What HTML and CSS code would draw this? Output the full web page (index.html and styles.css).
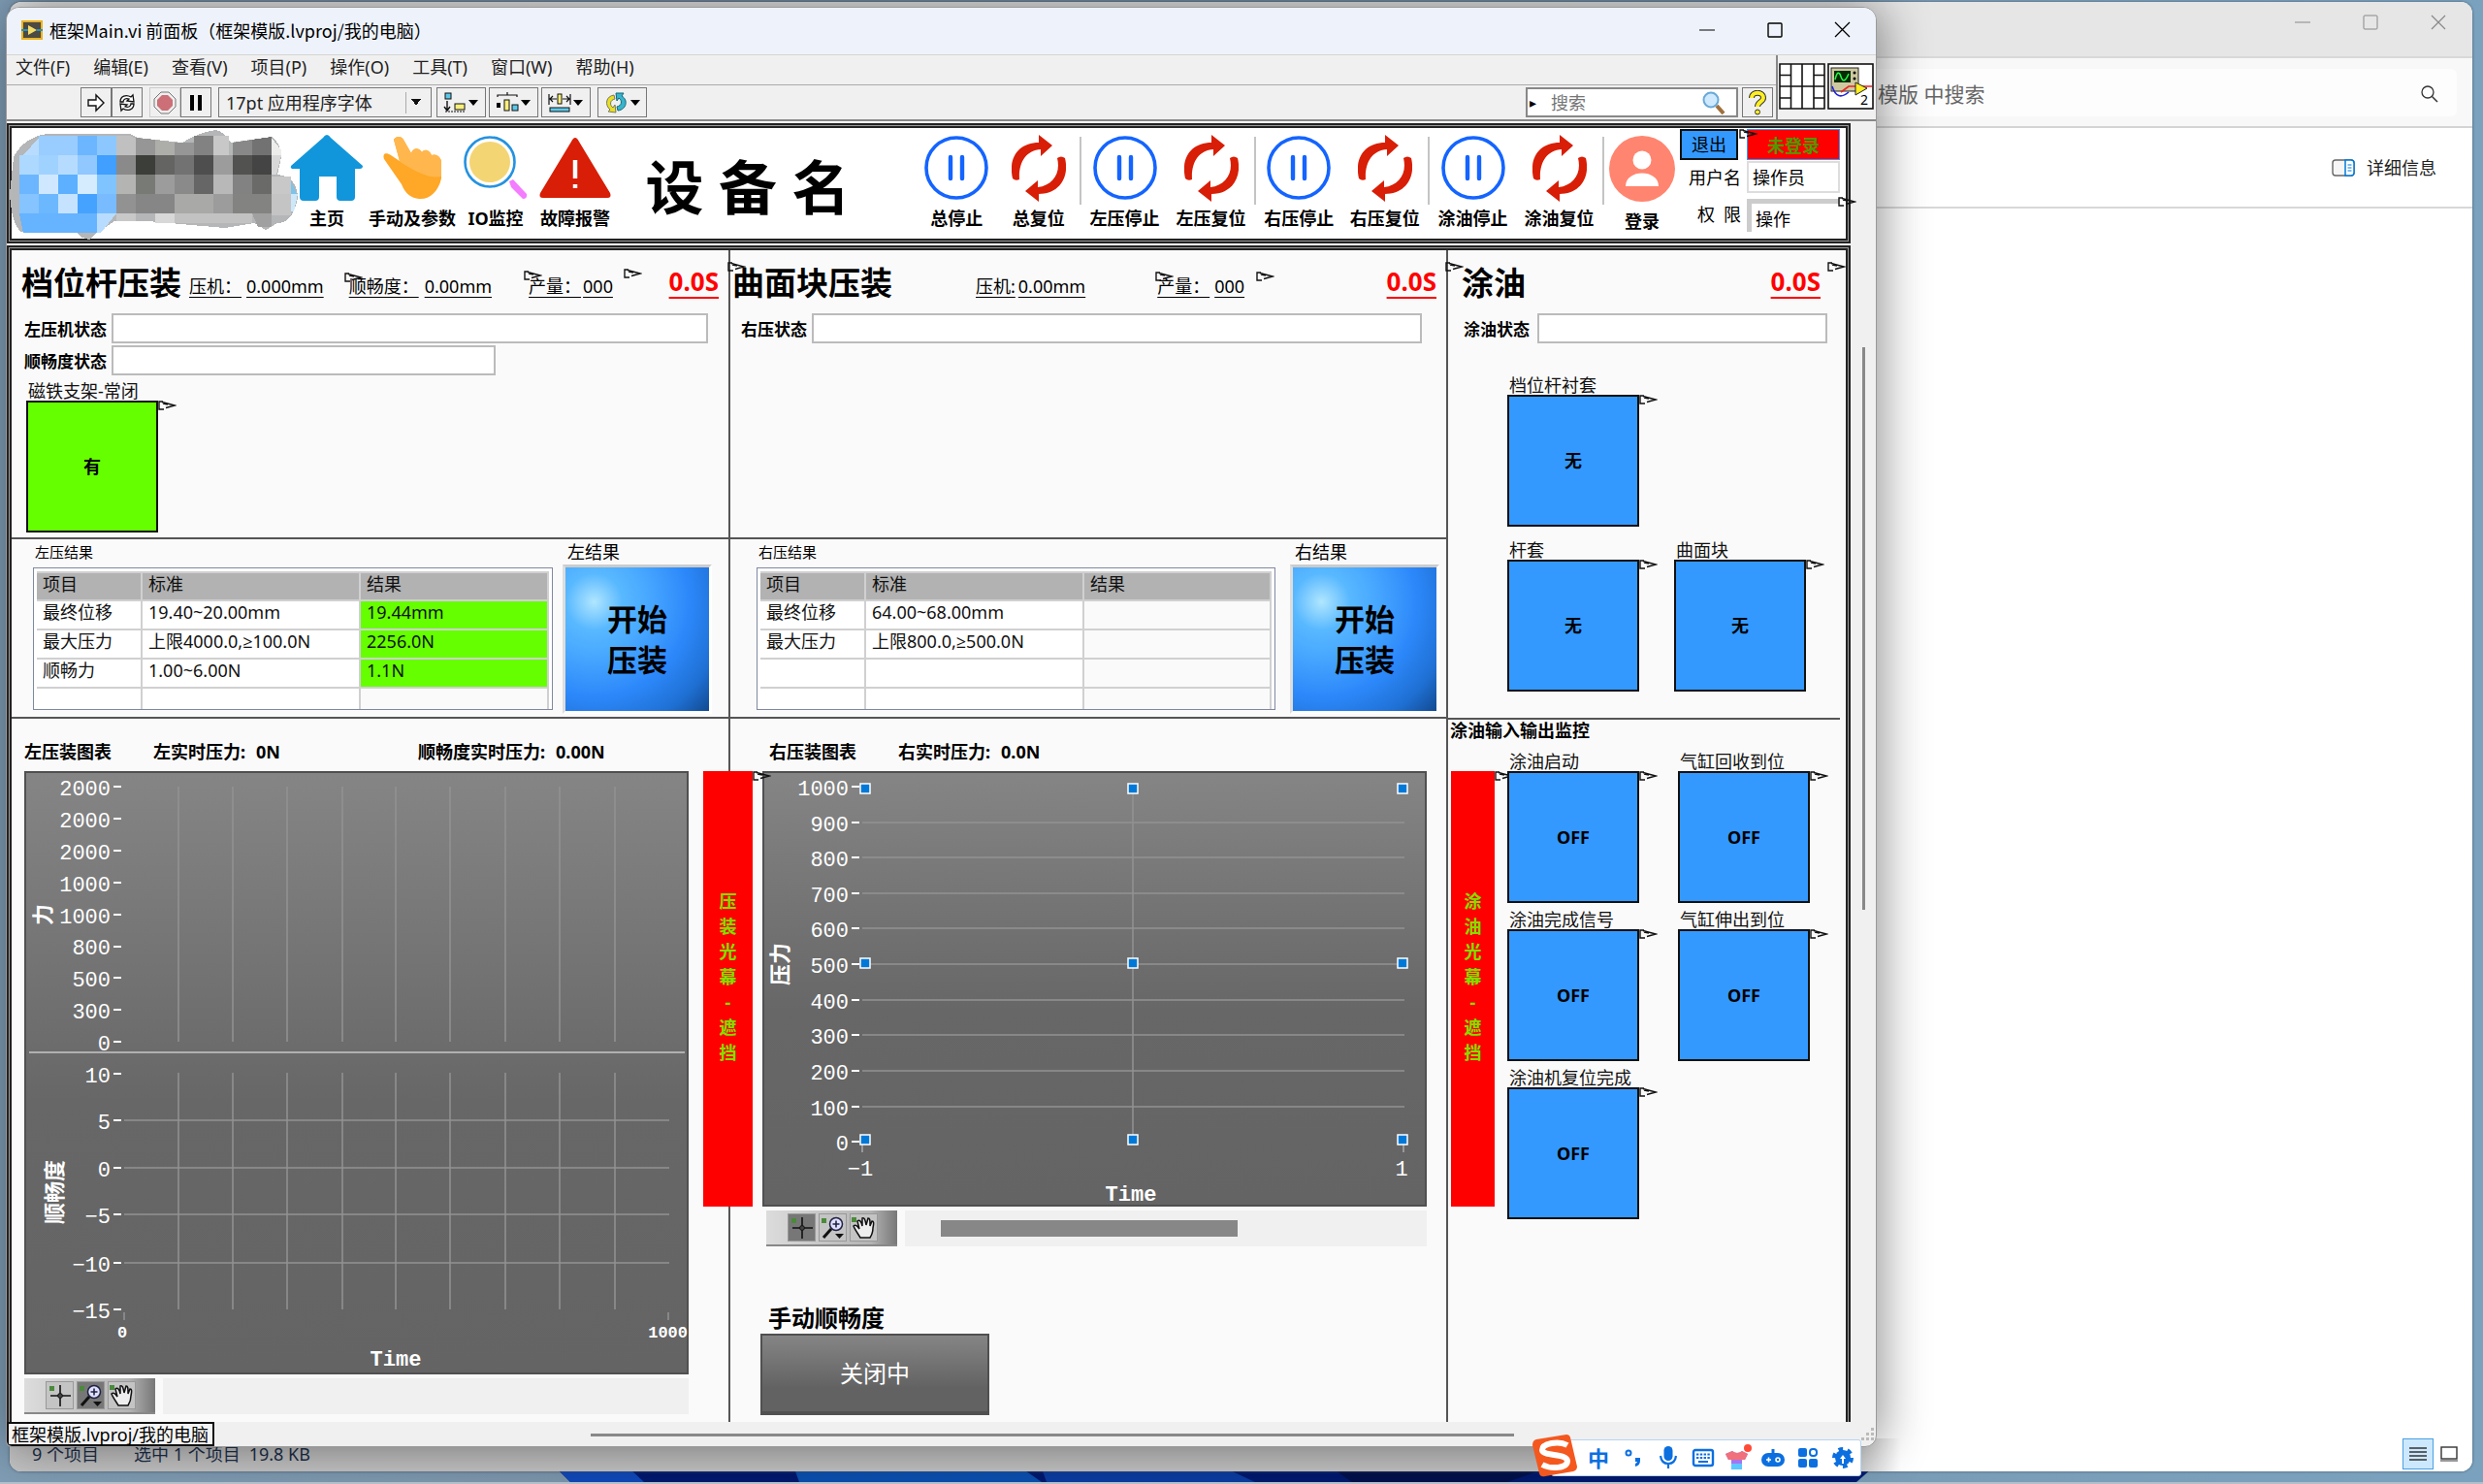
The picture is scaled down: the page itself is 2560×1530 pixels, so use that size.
FILE: index.html
```html
<!DOCTYPE html>
<html lang="zh-CN">
<head>
<meta charset="utf-8">
<title>框架Main.vi 前面板</title>
<link rel="stylesheet" href="styles.css">
</head>
<body>
<svg class="defs" aria-hidden="true">
  <defs>
    <symbol id="pin" viewBox="0 0 19 10"><path d="M5 1H1V9H6M4 1.5L17 5L8 7.5M5 3L10 4" fill="none" stroke="#111" stroke-width="1.4"/></symbol>
    <symbol id="pause" viewBox="0 0 66 66"><circle cx="33" cy="33" r="31" fill="#fff" stroke="#1464ff" stroke-width="3.6"/><path d="M27 22V44M39 22V44" stroke="#1464ff" stroke-width="4.4" stroke-linecap="round"/></symbol>
    <symbol id="reset" viewBox="0 0 56 70"><g fill="#d81e06"><path d="M1 46C-4 24 8 9 28 9V1L42 12L30 23V16C15 17 7 29 8 47Q4 49 1 46Z"/><path d="M55 25C60 46 48 62 28 62V70L14 59L27 48V55C42 53 51 41 47 25Q51 22 55 25Z"/></g></symbol>
    <linearGradient id="chartbg" x1="0" y1="0" x2="0" y2="1"><stop offset="0" stop-color="#858585"/><stop offset=".55" stop-color="#676767"/><stop offset="1" stop-color="#646464"/></linearGradient>
    <symbol id="cross" viewBox="0 0 28 28"><path d="M14 3V25M4 14H25" stroke="#111" stroke-width="1.6"/><circle cx="14" cy="14" r="2.4" fill="#444" stroke="#111"/><rect x="3" y="4" width="5" height="5" fill="#4a8a3a"/></symbol>
    <symbol id="lens" viewBox="0 0 28 28"><circle cx="17" cy="10" r="6.5" fill="#dfe0ff" stroke="#224" stroke-width="1.5"/><path d="M17 6.500V13.500M13.500 10H20.500" stroke="#224" stroke-width="1.6"/><path d="M12 15L4 24" stroke="#111" stroke-width="3"/><path d="M16 20H25L20.500 25Z" fill="#111"/><rect x="2" y="4" width="5" height="5" fill="#4a8a3a"/></symbol>
    <symbol id="grab" viewBox="0 0 28 28"><path d="M10 24C7 19 4 15 3 12C5 10 7 12 9 15L7 7C9 5 11 7 12 12L12 4C14 3 15 5 16 11L18 4C20 4 20 6 20 12L22 7C24 7 24 9 23 14C23 19 22 21 20 24Z" fill="#eee" stroke="#111" stroke-width="1.5"/><rect x="1" y="3" width="5" height="5" fill="#4a8a3a"/></symbol>
  </defs>
</svg>
<div class="desktop">
  <svg class="bloom" viewBox="0 0 1356 14" preserveAspectRatio="none" aria-hidden="true">
    <path d="M0 0H1356L1340 14H14Z" fill="#00196e"/>
    <path d="M0 0H75L90 14H14Z" fill="#1048b8"/><path d="M245 0H480L500 14H250Z" fill="#0a4fae"/><path d="M500 0H690L720 14H505Z" fill="#0b3ca0"/><path d="M800 0H1020L980 14H820Z" fill="#01104a"/>
  </svg>

  <section class="explorer">
    <header class="ex-title">
      <button aria-label="最小化"><svg width="16" height="16" viewBox="0 0 16 16"><path d="M0 8H16" stroke="#888"/></svg></button>
      <button aria-label="最大化"><svg width="16" height="16" viewBox="0 0 16 16"><rect x="1" y="1" width="14" height="14" rx="1" fill="none" stroke="#888"/></svg></button>
      <button aria-label="关闭"><svg width="16" height="16" viewBox="0 0 16 16"><path d="M1 1L15 15M15 1L1 15" stroke="#888" stroke-width="1.2"/></svg></button>
    </header>
    <div class="ex-address">
      <div class="ex-search"><input type="text" aria-label="搜索" value="模版 中搜索"><svg width="18" height="18" viewBox="0 0 18 18"><circle cx="7" cy="7" r="6" fill="none" stroke="#333" stroke-width="1.3"/><path d="M11.500 11.500L17 17" stroke="#333" stroke-width="1.5"/></svg></div>
    </div>
    <div class="ex-tools"><button><svg width="24" height="18" viewBox="0 0 24 18"><rect x="1" y="1" width="22" height="16" rx="3" fill="#f6f6f6" stroke="#666" stroke-width="1.4"/><path d="M14 1H20Q23 1 23 4V14Q23 17 20 17H14Z" fill="#fff" stroke="#0078d7" stroke-width="1.5"/><path d="M16.500 6H20.500M16.500 9H20.500M16.500 12H20.500" stroke="#0078d7"/></svg>详细信息</button></div>
    <div class="ex-body"></div>
    <footer class="ex-status"><span>9 个项目</span><span>选中 1 个项目&ensp;19.8 KB</span>
      <div class="views"><button class="on" aria-label="详细信息视图"><svg width="18" height="16" viewBox="0 0 18 16"><path d="M0 2H18M0 6H18M0 10H18M0 14H18" stroke="#333" stroke-width="1.4"/></svg></button><button aria-label="大图标视图"><svg width="18" height="16" viewBox="0 0 18 16"><rect x="1" y="1" width="16" height="12" fill="none" stroke="#333" stroke-width="1.4"/><path d="M0 15H18" stroke="#333"/></svg></button></div>
    </footer>
  </section>

  <section class="lv">
    <header class="lv-title">
      <svg width="22" height="20" viewBox="0 0 22 20"><rect width="22" height="20" fill="#ecb21f"/><rect x="2" y="2" width="18" height="16" fill="#4c4a42"/><path d="M7 5L16 10L7 15Z" fill="#f4dc6a"/><path d="M0 10H7M16 10H22" stroke="#2a8fb8" stroke-width="2"/></svg>
      <h1>框架Main.vi 前面板（框架模版.lvproj/我的电脑）</h1>
      <button aria-label="最小化"><svg width="18" height="18" viewBox="0 0 18 18"><path d="M1 9H17" stroke="#000" stroke-width="1.2"/></svg></button>
      <button aria-label="最大化"><svg width="18" height="18" viewBox="0 0 18 18"><rect x="2" y="2" width="14" height="14" rx="1" fill="none" stroke="#000" stroke-width="1.4"/></svg></button>
      <button aria-label="关闭"><svg width="18" height="18" viewBox="0 0 18 18"><path d="M1 1L16 16M16 1L1 16" stroke="#000" stroke-width="1.3"/></svg></button>
    </header>

    <div class="lv-bars">
      <div class="bars-left">
        <nav class="menu"><a href="#">文件(F)</a><a href="#">编辑(E)</a><a href="#">查看(V)</a><a href="#">项目(P)</a><a href="#">操作(O)</a><a href="#">工具(T)</a><a href="#">窗口(W)</a><a href="#">帮助(H)</a></nav>
        <div class="tools">
          <div class="tb-group run"><button class="tb" aria-label="运行"><svg width="20" height="20" viewBox="0 0 20 20"><path d="M2 7H10V2L18 10L10 18V13H2Z" fill="#fff" stroke="#111" stroke-width="1.4"/></svg></button><button class="tb" aria-label="连续运行"><svg width="26" height="20" viewBox="0 0 26 20"><path d="M6 9C6 3 12 1 17 4L19 2L20 9L13 8L15 6C12 5 9 6 9 9ZM20 11C20 17 14 19 9 16L7 18L6 11L13 12L11 14C14 15 17 14 17 11Z" fill="#fff" stroke="#111" stroke-width="1.3"/></svg></button></div>
          <div class="tb-group"><button class="tb dim" aria-label="中止"><svg width="24" height="24" viewBox="0 0 24 24"><path d="M8 1H16L23 8V16L16 23H8L1 16V8Z" fill="#eee" stroke="#777"/><path d="M9 4H15L20 9V15L15 20H9L4 15V9Z" fill="#cc6f76"/></svg></button><button class="tb" aria-label="暂停"><svg width="16" height="18" viewBox="0 0 16 18"><path d="M4 1V17M12 1V17" stroke="#000" stroke-width="4"/></svg></button></div>
          <select class="font-select" aria-label="字体"><option>17pt 应用程序字体</option></select>
          <button class="tb drop" aria-label="对齐"><svg width="38" height="22" viewBox="0 0 38 22"><rect x="2" y="1" width="6" height="6" fill="#5cc8e8" stroke="#111"/><path d="M4 9V18M1 15L4 19L7 15" fill="none" stroke="#111" stroke-width="1.4"/><rect x="12" y="12" width="10" height="6" fill="#f8ef7a" stroke="#111"/><path d="M2 20H23" stroke="#111" stroke-dasharray="2 1"/><path d="M26 8H36L31 14Z"/></svg></button>
          <button class="tb drop" aria-label="分布"><svg width="38" height="22" viewBox="0 0 38 22"><path d="M2 5V3H22V5M12 3V0" fill="none" stroke="#111" stroke-width="1.2"/><rect x="1" y="11" width="4" height="5"/><rect x="9" y="8" width="5" height="11" fill="#f8ef7a" stroke="#111"/><rect x="17" y="13" width="6" height="6" fill="#5cc8e8" stroke="#111"/><path d="M26 8H36L31 14Z"/></svg></button>
          <button class="tb drop" aria-label="调整大小"><svg width="38" height="22" viewBox="0 0 38 22"><path d="M1 2V13M23 2V13M2 7H9M15 7H22M5 4L2 7L5 10M19 4L22 7L19 10" fill="none" stroke="#111" stroke-width="1.2"/><rect x="10" y="2" width="4" height="10" fill="#f8ef7a" stroke="#111"/><rect x="2" y="16" width="20" height="4" fill="#5cc8e8" stroke="#111"/><path d="M26 8H36L31 14Z"/></svg></button>
          <button class="tb drop last" aria-label="重新排序"><svg width="38" height="24" viewBox="0 0 38 24"><path d="M10 4C2 5 0 14 6 19L4 21L12 22L11 14L9 17C5 14 6 9 11 8Z" fill="#e8e020" stroke="#776"/><path d="M14 20C23 19 25 9 18 5L20 2L12 2L13 10L15 7C19 10 18 15 13 16Z" fill="#38b4cc" stroke="#167"/><path d="M27 9H37L32 15Z"/></svg></button>
          <div class="lv-search"><span>▸</span><input type="text" placeholder="搜索" aria-label="搜索"><svg width="26" height="26" viewBox="0 0 26 26"><circle cx="10" cy="10" r="7.5" fill="#cfeaff" stroke="#6aa9d8" stroke-width="2"/><path d="M16 16L23 24" stroke="#a0703c" stroke-width="4"/></svg></div>
          <button class="tb help" aria-label="帮助"><svg width="20" height="26" viewBox="0 0 20 26"><path d="M4 8C4 1 16 1 16 8C16 12 10 12 10 17" fill="none" stroke="#333" stroke-width="6"/><path d="M4 8C4 1 16 1 16 8C16 12 10 12 10 17" fill="none" stroke="#ffee22" stroke-width="4"/><circle cx="10" cy="22.500" r="2.500" fill="#fe2" stroke="#333"/></svg></button>
        </div>
      </div>
      <div class="bars-right">
        <svg width="48" height="48" viewBox="0 0 48 48"><path d="M1 1H47V47H1ZM12.500 1V47M24 1V47M36 1V47M1 12.500H12M36 12.500H47M1 24H47M1 36H12M36 36H47" fill="#fff" stroke="#111" stroke-width="1.6"/></svg>
        <svg width="48" height="48" viewBox="0 0 48 48"><rect x="1" y="1" width="46" height="46" fill="#fff" stroke="#111" stroke-width="1.6"/><rect x="4" y="5" width="28" height="24" fill="#cfc9a0" stroke="#222"/><rect x="7" y="8" width="17" height="12" fill="#052b05"/><path d="M8 17Q11 5 14 14T22 11" fill="none" stroke="#2f4" stroke-width="1.5"/><circle cx="28" cy="10" r="1.500"/><circle cx="28" cy="16" r="1.500"/><path d="M5 24Q10 40 22 30" fill="none" stroke="#22d" stroke-width="1.6"/><path d="M14 30L22 24H46" fill="none" stroke="#e22" stroke-width="1.6"/><path d="M29 20L41 26L29 33Z" fill="#fe2" stroke="#222"/><text x="34" y="43" font-size="14">2</text></svg>
      </div>
    </div>

    <div class="canvas">
      <div class="sheet">
        <div class="frame banner">
          <svg class="mosaic" width="300" height="116" viewBox="8 132 300 116" shape-rendering="crispEdges">
            <path d="M14 162Q24 142 48 138H134L142 142L188 147Q204 137 222 134Q232 136 238 147L280 141Q290 148 290 162L286 180Q306 182 307 204Q302 230 286 230L274 237L262 230L232 235L152 228L118 228L100 240L92 247Q84 246 78 239H22Q12 232 10 200Z" fill="#b4b6b8"/>
            <path d="M40 140H120V160H40Z" fill="#99ccff"/><path d="M24 160L40 142V160Z" fill="#b8dcff"/><path d="M80 140H100V160H80Z" fill="#6cb6ff"/><path d="M100 140H120V160H100Z" fill="#8cc8ff"/>
            <path d="M20 160H40V180H20Z" fill="#add8ff"/><path d="M40 160H60V180H40Z" fill="#a0d2ff"/><path d="M60 160H80V180H60Z" fill="#b5dcff"/><path d="M80 160H100V180H80Z" fill="#90c8ff"/><path d="M100 160H120V180H100Z" fill="#409fff"/>
            <path d="M20 180H40V200H20Z" fill="#6cb6ff"/><path d="M40 180H60V200H40Z" fill="#cfe8ff"/><path d="M60 180H80V200H60Z" fill="#5cb0ff"/><path d="M80 180H100V200H80Z" fill="#d5ecff"/><path d="M100 180H120V200H100Z" fill="#80c4ff"/>
            <path d="M20 200H40V220H20Z" fill="#86c4ff"/><path d="M40 200H60V220H40Z" fill="#6cb8ff"/><path d="M60 200H80V220H60Z" fill="#c5e3ff"/><path d="M80 200H100V220H80Z" fill="#45a3ff"/><path d="M100 200H120V220H100Z" fill="#78bcff"/>
            <path d="M20 220H100V240H24Z" fill="#66b3ff"/><path d="M100 220H120L112 230L104 240H100Z" fill="#b8dcff"/>
            <path d="M120 140H134L140 143V160H120Z" fill="#c0c0c0"/><path d="M140 142L160 144V160H140Z" fill="#969696"/><path d="M160 144L180 147V160H160Z" fill="#adaeaa"/><path d="M180 147H200V160H180Z" fill="#969696"/><path d="M200 140H220V160H200Z" fill="#828282"/><path d="M220 140H236V160H220Z" fill="#c8c8c8"/><path d="M240 147L260 144V160H240Z" fill="#888"/><path d="M260 144L280 141V160H260Z" fill="#727272"/><path d="M280 142L290 155V160H280Z" fill="#ededeb"/>
            <path d="M120 160H140V180H120Z" fill="#8a8a8a"/><path d="M140 160H160V180H140Z" fill="#3c3e3a"/><path d="M160 160H180V180H160Z" fill="#646562"/><path d="M180 160H200V180H180Z" fill="#727272"/><path d="M200 160H220V180H200Z" fill="#4e4e4e"/><path d="M220 160H240V180H220Z" fill="#9c9c9c"/><path d="M240 160H260V180H240Z" fill="#525250"/><path d="M260 160H280V180H260Z" fill="#444"/><path d="M280 160H290L285 180H280Z" fill="#d8d8d8"/>
            <path d="M120 180H140V200H120Z" fill="#b4b4b2"/><path d="M140 180H160V200H140Z" fill="#787a76"/><path d="M160 180H180V200H160Z" fill="#9c9c9c"/><path d="M180 180H200V200H180Z" fill="#8a8a8a"/><path d="M200 180H220V200H200Z" fill="#666"/><path d="M220 180H240V200H220Z" fill="#b8b8b8"/><path d="M240 180H260V200H240Z" fill="#828282"/><path d="M260 180H280V200H260Z" fill="#6a6a68"/><path d="M280 182H300V200H280Z" fill="#c8c8c8"/><path d="M300 186L306 200H300Z" fill="#7cc4ea"/>
            <path d="M120 200H140V220H120Z" fill="#929292"/><path d="M140 200H180V220H140Z" fill="#868686"/><path d="M180 200H220V220H180Z" fill="#a9a9a7"/><path d="M220 200H240V220H220Z" fill="#9c9c9c"/><path d="M240 200H280V220H240Z" fill="#838381"/><path d="M280 200H300V222H280Z" fill="#c4c4c4"/><path d="M300 200H307L303 218H300Z" fill="#cde8f8"/>
            <path d="M120 220H140V228H120Z" fill="#c8c8c8"/><path d="M160 220H180V230H160Z" fill="#d8d8d8"/><path d="M180 220H260V230H180Z" fill="#c2c2c2"/><path d="M260 220H280V234H266Z" fill="#a0a0a0"/>
          </svg>
          <button class="nav home"><svg width="76" height="68" viewBox="0 0 76 68"><path d="M38 0Q40 0 42 3L75 32Q75 35 72 35H67V64Q67 68 63 68H52Q48 68 48 64V43H30V64Q30 68 26 68H14Q10 68 10 64V35H2Q0 34 1 32L34 3Q36 0 38 0Z" fill="#1296db"/></svg>主页</button>
          <button class="nav hand"><svg width="62" height="66" viewBox="0 0 62 66"><path d="M12 4C14 0 20 0 22 4L30 18C32 12 38 12 41 17C44 13 49 15 51 20C56 18 60 22 61 26V44C58 58 48 66 38 65C30 64 24 60 20 50L2 24C0 18 4 17 9 20L18 26Z" fill="#ffa726"/><path d="M12 4C14 0 20 0 22 4L30 18C32 12 38 12 41 17C44 13 49 15 51 20C56 18 60 22 61 26V42C50 44 40 40 20 28L18 26Z" fill="#ffb74d"/></svg>手动及参数</button>
          <button class="nav io"><svg width="68" height="68" viewBox="0 0 68 68"><circle cx="28" cy="28" r="25.500" fill="#fff" stroke="#2492e0" stroke-width="2.600"/><circle cx="28" cy="28" r="21" fill="#f4d574"/><path d="M48 48L52 46L66 61Q67 66 62 66L50 54Z" fill="#f47cff"/></svg>IO监控</button>
          <button class="nav alarm"><svg width="76" height="66" viewBox="0 0 76 66"><path d="M38 2Q40 2 42 6L74 59Q76 64 71 64H5Q0 64 2 59L34 6Q36 2 38 2Z" fill="#d81e06"/><path d="M38 25V44M38 50V54" stroke="#fff" stroke-width="4.500"/></svg>故障报警</button>
          <h2 class="device">设 备 名</h2>
          <div class="ctl g1"><button class="nav"><svg width="66" height="66"><use href="#pause"/></svg>总停止</button><button class="nav"><svg width="56" height="70"><use href="#reset"/></svg>总复位</button></div>
          <div class="ctl g2"><button class="nav"><svg width="66" height="66"><use href="#pause"/></svg>左压停止</button><button class="nav"><svg width="56" height="70"><use href="#reset"/></svg>左压复位</button></div>
          <div class="ctl g3"><button class="nav"><svg width="66" height="66"><use href="#pause"/></svg>右压停止</button><button class="nav"><svg width="56" height="70"><use href="#reset"/></svg>右压复位</button></div>
          <div class="ctl g4"><button class="nav"><svg width="66" height="66"><use href="#pause"/></svg>涂油停止</button><button class="nav"><svg width="56" height="70"><use href="#reset"/></svg>涂油复位</button></div>
          <button class="nav login"><svg width="68" height="68" viewBox="0 0 68 68"><circle cx="34" cy="34" r="34" fill="#ff8570"/><circle cx="34" cy="25" r="9.500" fill="#fff"/><path d="M17 52C17 34 51 34 51 52Z" fill="#fff"/></svg>登录</button>
          <div class="user">
            <button class="logout">退出</button><div class="state">未登录</div>
            <label for="uname">用户名</label><input id="uname" type="text" value="操作员">
            <label for="role">权&ensp;限</label><input id="role" class="sunk" type="text" value="操作">
            <svg class="pin pin-user"><use href="#pin"/></svg><svg class="pin pin-role"><use href="#pin"/></svg>
          </div>
        </div>

        <div class="frame work">
          <div class="col">
            <section class="top">
              <div class="head"><h2>档位杆压装</h2><u class="k1">压机：</u><u class="v5">0.000mm</u><u class="k2">顺畅度：</u><u class="v6">0.00mm</u><u class="k3">产量：</u><u class="v2">000</u><strong>0.0S</strong></div>
              <div class="field wide"><label for="s1">左压机状态</label><input id="s1" type="text"></div>
              <div class="field half"><label for="s2">顺畅度状态</label><input id="s2" type="text"></div>
              <div class="led on magnet"><label for="m1">磁铁支架-常闭</label><button id="m1">有</button><svg class="pin"><use href="#pin"/></svg></div>
              <svg class="pin pa"><use href="#pin"/></svg><svg class="pin pb"><use href="#pin"/></svg><svg class="pin pc"><use href="#pin"/></svg><svg class="pin edge"><use href="#pin"/></svg>
            </section>
            <section class="mid">
              <div class="tbl"><h3>左压结果</h3><div class="tbl-box"><table>
                <colgroup><col class="c1"><col class="c2"><col></colgroup>
                <thead><tr><th>项目</th><th>标准</th><th>结果</th></tr></thead>
                <tbody><tr><td>最终位移</td><td>19.40~20.00mm</td><td class="ok">19.44mm</td></tr><tr><td>最大压力</td><td>上限4000.0,≥100.0N</td><td class="ok">2256.0N</td></tr><tr><td>顺畅力</td><td>1.00~6.00N</td><td class="ok">1.1N</td></tr><tr class="short"><td></td><td></td><td></td></tr></tbody>
              </table></div></div>
              <div class="start"><label for="b1">左结果</label><button id="b1">开始<br>压装</button></div>
            </section>
            <section class="low">
              <div class="live"><b>左压装图表</b><b class="l2">左实时压力:</b><b class="l3">0N</b><b class="l4">顺畅度实时压力:</b><b class="l3">0.00N</b></div>
              <svg class="chart" viewBox="0 0 685 622">
                <rect x="1" y="1" width="683" height="620" fill="url(#chartbg)" stroke="#505050" stroke-width="2"/>
                <path d="M159 16V279M215 16V279M271 16V279M328 16V279M383 16V279M439 16V279M496 16V279M552 16V279M609 16V279M159 311V555M215 311V555M271 311V555M328 311V555M383 311V555M439 311V555M496 311V555M552 311V555M609 311V555M103 360H665M103 409H665M103 457H665M103 507H665" stroke="#929292" stroke-width="1.500" fill="none"/>
                <path d="M5 290H681" stroke="#b0b0b0" stroke-width="2"/>
                <path d="M92 16H100M92 49H100M92 82H100M92 115H100M92 148H100M92 181H100M92 213H100M92 246H100M92 279H100M92 312H100M92 360H100M92 409H100M92 457H100M92 507H100M92 555H100" stroke="#fff" stroke-width="2"/>
                <path d="M103 558V566M664 558V566" stroke="#aaa"/>
                <g class="ticks" text-anchor="end"><text x="89" y="25">2000</text><text x="89" y="58">2000</text><text x="89" y="91">2000</text><text x="89" y="124">1000</text><text x="89" y="157">1000</text><text x="89" y="189">800</text><text x="89" y="222">500</text><text x="89" y="255">300</text><text x="89" y="288">0</text><text x="89" y="321">10</text><text x="89" y="369">5</text><text x="89" y="418">0</text><text x="89" y="466">−5</text><text x="89" y="516">−10</text><text x="89" y="564">−15</text></g>
                <g class="small"><text x="101" y="584" text-anchor="middle">0</text><text x="684" y="584" text-anchor="end">1000</text></g>
                <text class="axis" x="383" y="613" text-anchor="middle">Time</text>
                <text class="axis" transform="translate(27 148) rotate(-90)" text-anchor="middle">力</text>
                <text class="axis" transform="translate(39 434) rotate(-90)" text-anchor="middle">顺畅度</text>
              </svg>
              <div class="palette"><div class="pal"><button class="p-off" aria-label="光标"><svg width="28" height="28"><use href="#cross"/></svg></button><button class="p-on" aria-label="缩放"><svg width="28" height="28"><use href="#lens"/></svg></button><button class="p-off" aria-label="平移"><svg width="28" height="28"><use href="#grab"/></svg></button></div><div class="strip"></div></div>
            </section>
            <div class="curtain over"><span>压<br>装<br>光<br>幕<br>-<br>遮<br>挡</span><svg class="pin"><use href="#pin"/></svg></div>
          </div>

          <div class="col right">
            <section class="top">
              <div class="head"><h2>曲面块压装</h2><u class="r1">压机:</u><u class="r2">0.00mm</u><u class="r3">产量：</u><u class="v5">000</u><strong>0.0S</strong></div>
              <div class="field"><label for="s3">右压状态</label><input id="s3" type="text"></div>
              <svg class="pin pd"><use href="#pin"/></svg><svg class="pin pe"><use href="#pin"/></svg><svg class="pin edge"><use href="#pin"/></svg>
            </section>
            <section class="mid">
              <div class="tbl"><h3>右压结果</h3><div class="tbl-box"><table>
                <colgroup><col class="c1"><col class="c2"><col></colgroup>
                <thead><tr><th>项目</th><th>标准</th><th>结果</th></tr></thead>
                <tbody><tr><td>最终位移</td><td>64.00~68.00mm</td><td></td></tr><tr><td>最大压力</td><td>上限800.0,≥500.0N</td><td></td></tr><tr><td></td><td></td><td></td></tr><tr class="short"><td></td><td></td><td></td></tr></tbody>
              </table></div></div>
              <div class="start"><label for="b2">右结果</label><button id="b2">开始<br>压装</button></div>
            </section>
            <section class="low">
              <div class="live"><b>右压装图表</b><b class="l2">右实时压力:</b><b class="l3">0.0N</b></div>
              <svg class="chart" viewBox="0 0 685 449">
                <rect x="1" y="1" width="683" height="447" fill="url(#chartbg)" stroke="#505050" stroke-width="2"/>
                <path d="M382 16V382M103 53H662M103 89H662M103 126H662M103 162H662M103 199H662M103 236H662M103 272H662M103 309H662M103 346H662" stroke="#929292" stroke-width="1.500" fill="none"/>
                <path d="M92 16H100M92 53H100M92 89H100M92 126H100M92 162H100M92 199H100M92 236H100M92 272H100M92 309H100M92 346H100M92 382H100" stroke="#fff" stroke-width="2"/>
                <path d="M103 385V393M661 385V393" stroke="#ccc"/>
                <g class="ticks" text-anchor="end"><text x="89" y="25">1000</text><text x="89" y="62">900</text><text x="89" y="98">800</text><text x="89" y="135">700</text><text x="89" y="171">600</text><text x="89" y="208">500</text><text x="89" y="245">400</text><text x="89" y="281">300</text><text x="89" y="318">200</text><text x="89" y="355">100</text><text x="89" y="391">0</text></g>
                <g class="ticks" text-anchor="middle"><text x="101" y="417">−1</text><text x="659" y="417">1</text></g>
                <text class="axis" x="380" y="443" text-anchor="middle">Time</text>
                <text class="axis" transform="translate(26 199) rotate(-90)" text-anchor="middle">压力</text>
                <g fill="#0078d7" stroke="#fff" stroke-width="1.500"><rect x="101" y="13" width="10" height="10"/><rect x="377" y="13" width="10" height="10"/><rect x="655" y="13" width="10" height="10"/><rect x="101" y="193" width="10" height="10"/><rect x="377" y="193" width="10" height="10"/><rect x="655" y="193" width="10" height="10"/><rect x="101" y="375" width="10" height="10"/><rect x="377" y="375" width="10" height="10"/><rect x="655" y="375" width="10" height="10"/></g>
              </svg>
              <div class="palette"><div class="pal"><button class="p-on" aria-label="光标"><svg width="28" height="28"><use href="#cross"/></svg></button><button class="p-off" aria-label="缩放"><svg width="28" height="28"><use href="#lens"/></svg></button><button class="p-off" aria-label="平移"><svg width="28" height="28"><use href="#grab"/></svg></button></div><div class="strip"><i></i></div></div>
              <div class="manual"><label for="mm">手动顺畅度</label><button id="mm">关闭中</button></div>
            </section>
          </div>

          <div class="col oil">
            <section class="top">
              <div class="head"><h2>涂油</h2><strong>0.0S</strong></div>
              <div class="field"><label for="s4">涂油状态</label><input id="s4" type="text"></div>
              <div class="leds">
                <div class="led"><label for="o1">档位杆衬套</label><button id="o1">无</button><svg class="pin"><use href="#pin"/></svg></div><div></div>
                <div class="led"><label for="o2">杆套</label><button id="o2">无</button><svg class="pin"><use href="#pin"/></svg></div>
                <div class="led"><label for="o3">曲面块</label><button id="o3">无</button><svg class="pin"><use href="#pin"/></svg></div>
              </div>
              <svg class="pin edge"><use href="#pin"/></svg>
            </section>
            <section class="low">
              <h3>涂油输入输出监控</h3>
              <div class="io-row">
                <div class="curtain"><span>涂<br>油<br>光<br>幕<br>-<br>遮<br>挡</span><svg class="pin"><use href="#pin"/></svg></div>
                <div class="leds">
                  <div class="led"><label for="i1">涂油启动</label><button id="i1">OFF</button><svg class="pin"><use href="#pin"/></svg></div>
                  <div class="led"><label for="i2">气缸回收到位</label><button id="i2">OFF</button><svg class="pin"><use href="#pin"/></svg></div>
                  <div class="led"><label for="i3">涂油完成信号</label><button id="i3">OFF</button><svg class="pin"><use href="#pin"/></svg></div>
                  <div class="led"><label for="i4">气缸伸出到位</label><button id="i4">OFF</button><svg class="pin"><use href="#pin"/></svg></div>
                  <div class="led"><label for="i5">涂油机复位完成</label><button id="i5">OFF</button><svg class="pin"><use href="#pin"/></svg></div>
                </div>
              </div>
            </section>
          </div>
        </div>
      </div>
      <div class="vscroll"><i></i></div>
    </div>
    <div class="hscroll"><div class="target">框架模版.lvproj/我的电脑</div><div class="track"><i></i></div><svg width="16" height="16" viewBox="0 0 16 16"><path d="M11 1h3v3h-3zM6 6h3v3h-3zM11 6h3v3h-3zM1 11h3v3h-3zM6 11h3v3h-3zM11 11h3v3h-3z" fill="#bbb"/></svg></div>
  </section>

  <aside class="ime">
    <svg class="sogou" width="48" height="46" viewBox="0 0 48 46"><path d="M5 6L36 1Q39 1 40 4L47 34Q47 38 43 39L14 44Q9 45 8 41L1 12Q1 7 5 6Z" fill="#f4581f"/><path d="M37 12C28 7 11 10 11 17C12 24 36 20 37 28C37 36 20 37 11 32" fill="none" stroke="#fff" stroke-width="6"/></svg>
    <button>中</button>
    <button aria-label="标点"><svg width="20" height="20" viewBox="0 0 20 20"><circle cx="5" cy="5" r="2.500" fill="none" stroke="#0b6fe0" stroke-width="2"/><path d="M12 10H17V13Q17 18 12 19V16Q14 15 14 14H12Z" fill="#0b6fe0"/></svg></button>
    <button aria-label="语音"><svg width="20" height="24" viewBox="0 0 20 24"><rect x="5.500" y="0" width="9" height="15" rx="4.500" fill="#0b6fe0"/><path d="M2 10Q3 18 10 18T18 10M10 18V23" fill="none" stroke="#0b6fe0" stroke-width="2.200"/></svg></button>
    <button aria-label="键盘"><svg width="24" height="20" viewBox="0 0 24 20"><rect x="2" y="2" width="20" height="16" rx="2" fill="none" stroke="#0b6fe0" stroke-width="2.400"/><path d="M5 6.500H19M5 10H19" stroke="#0b6fe0" stroke-width="2" stroke-dasharray="2.400 1.400"/><path d="M7 14H17" stroke="#0b6fe0" stroke-width="2"/></svg></button>
    <button aria-label="皮肤"><svg width="28" height="28" viewBox="0 0 28 28"><path d="M8 7Q13 11 18 7L24 10L21 16L18 15V26H7V15L4 16L1 10Z" fill="#a674f0"/><path d="M8 7Q13 11 18 7L24 10L21 16L4 16L1 10Z" fill="#f0707c"/><path d="M7 20H18V26H7Z" fill="#5cc8ff"/><circle cx="24" cy="4" r="4" fill="#ff4a38"/></svg></button>
    <button aria-label="助手"><svg width="26" height="22" viewBox="0 0 26 22"><rect x="1" y="6" width="24" height="14" rx="7" fill="#0b6fe0"/><path d="M13 6V2" stroke="#0b6fe0" stroke-width="3"/><path d="M6 13H11M8.500 10.500V15.500" stroke="#fff" stroke-width="1.600"/><circle cx="18" cy="13" r="2" fill="none" stroke="#fff" stroke-width="1.600"/></svg></button>
    <button aria-label="工具箱"><svg width="20" height="20" viewBox="0 0 20 20"><rect width="9" height="9" rx="2" fill="#0b6fe0"/><rect x="12" y="1" width="7" height="7" rx="3" fill="none" stroke="#0b6fe0" stroke-width="2"/><rect y="11" width="9" height="9" rx="2" fill="#0b6fe0"/><rect x="11" y="11" width="9" height="9" rx="2" fill="#0b6fe0"/></svg></button>
    <button aria-label="设置"><svg width="22" height="22" viewBox="0 0 22 22"><circle cx="11" cy="11" r="8" fill="#0b6fe0"/><circle cx="11" cy="11" r="9" fill="none" stroke="#0b6fe0" stroke-width="4" stroke-dasharray="4.700 4.700"/><path d="M11 8L14 12H12V17H10V12H8Z" fill="#fff"/></svg></button>
  </aside>
</div>
</body>
</html>
```
FILE: styles.css
```css
* { box-sizing: border-box; }
html, body { height: 100%; margin: 0; }
body { font: 18px/24px "Noto Sans", "Open Sans", "Noto Sans CJK SC", sans-serif; color: #000; overflow: hidden; }
button, input, select { font: inherit; color: inherit; margin: 0; padding: 0; }
button { background: none; border: 0; }
h1, h2, h3 { margin: 0; font-weight: 400; font-size: inherit; }
a { color: inherit; text-decoration: none; }
svg { display: block; flex: none; }
.defs { position: absolute; width: 0; height: 0; }

.desktop { position: relative; height: 100vh; background: linear-gradient(90deg, #7f9db5, #7b93a8 30%, #7aa2be); overflow: hidden; border-bottom: 2px solid #b4bec8; }
.bloom { position: absolute; left: 574px; right: 630px; bottom: 0; height: 14px; width: auto; }

/* file explorer behind */
.explorer { position: absolute; left: 10px; right: 11px; top: 2px; bottom: 11px; background: #fff; border-radius: 12px; overflow: hidden; display: flex; flex-direction: column; box-shadow: 0 0 3px #456; }
.ex-title { height: 58px; background: #e6e6e6; border-bottom: 2px solid #d8d8d8; display: flex; justify-content: flex-end; gap: 54px; padding: 13px 27px 0 0; align-items: flex-start; }
.ex-address { height: 72px; background: #f8f8f8; border-bottom: 2px solid #d4d4d4; padding: 11px 16px 10px 1800px; }
.ex-search { height: 100%; background: #fdfdfd; border-radius: 6px; display: flex; align-items: center; padding: 2px 19px 0 126px; }
.ex-search input { flex: 1; border: 0; background: none; font-size: 21px; color: #666; }
.ex-tools { height: 83px; border-bottom: 2px solid #d8d8d8; display: flex; justify-content: flex-end; align-items: center; padding: 0 37px 0 0; }
.ex-tools button { display: flex; align-items: center; gap: 12px; color: #222; }
.ex-body { flex: 1; }
.ex-status { height: 34px; display: flex; gap: 36px; padding: 0 0 2px 23px; color: #1c2f4a; align-items: center; background: linear-gradient(90deg, #c4c4c4 1900px, #fff 1950px); }
.views { margin-left: auto; display: flex; padding-right: 8px; }
.views button { width: 32px; height: 32px; display: grid; place-items: center; }
.views .on { background: #cce8ff; border: 1px solid #4aa0e0; }

/* LabVIEW window */
.lv { position: absolute; left: 6px; right: 625px; top: 7px; bottom: 36px; background: #f0f0f0; border: 1px solid #9a9a9a; border-radius: 14px 14px 12px 6px; overflow: hidden; display: flex; flex-direction: column; box-shadow: 4px 0 50px rgba(0,0,0,.45); }
.lv-title { height: 48px; background: #eef3fb; display: flex; align-items: center; padding: 0 25px 2px 15px; }
.lv-title h1 { flex: 1; margin-left: 7px; font-family: "Noto Sans CJK SC", sans-serif; }
.lv-title button { margin-left: 52px; }
.lv-bars { display: flex; height: 69px; border-top: 1px solid #d4d4d4; border-bottom: 2px solid #888; }
.bars-left { flex: 1; border-right: 2px solid #888; display: flex; flex-direction: column; }
.menu { height: 31px; display: flex; gap: 24px; padding: 0 0 0 9px; border-bottom: 1px solid #aaa; color: #222; }
.tools { flex: 1; display: flex; align-items: center; padding-right: 3px; }
.tb-group { display: flex; margin-right: 7px; }
.run { margin-left: 76px; }
.tb { height: 31px; min-width: 32px; border: 1px solid #777; display: grid; place-items: center; }
.tb.dim { border-color: #ccc; }
.drop { width: 51px; margin-right: 3px; }
.drop.last { margin-left: 4px; }
.font-select { width: 220px; height: 31px; border: 1px solid #777; background: #f0f0f0; padding-left: 7px; margin-right: 5px; border-radius: 0; color: #222; appearance: none; background-image: linear-gradient(90deg, #aaa, #aaa), conic-gradient(from 325deg at 50% 100%, #111 70deg, transparent 0); background-size: 1px 22px, 10px 7px; background-position: 192px 4px, 198px 11px; background-repeat: no-repeat; }
.lv-search { margin-left: auto; width: 219px; height: 31px; border: 2px solid #888; background: #fff; display: flex; align-items: center; padding: 0 10px 0 2px; }
.lv-search span { width: 22px; font-size: 14px; }
.lv-search input { flex: 1; min-width: 0; border: 0; outline: 0; }
.help { margin-left: 4px; }
.bars-right { display: flex; gap: 2px; padding: 8px 2px 0 1px; }

.canvas { flex: 1; min-height: 0; display: flex; overflow: hidden; }
.sheet { flex: 1; display: flex; flex-direction: column; gap: 2px; padding: 2px 0 0; background: #fff; }
.vscroll { width: 26px; padding: 233px 10px 0 12px; }
.vscroll i { display: block; width: 3px; height: 580px; background: #888; }
.frame { border: 5px double #222; background: linear-gradient(#fff, #fff) padding-box, #999; }
.banner { height: 124px; display: flex; position: relative; }
.mosaic { margin: 0 -12px 0 -4px; }
.nav { display: flex; flex-direction: column; align-items: center; justify-content: flex-end; height: 105px; font-weight: 700; line-height: 24px; white-space: nowrap; }
.nav svg { margin: auto 0; }
.home { width: 82px; }
.hand { width: 94px; }
.io { width: 78px; }
.alarm { width: 86px; }
.device { flex: 1; padding: 4px 38px 0 0; text-align: center; font-size: 60px; line-height: 114px; font-weight: 700; white-space: pre; }
.ctl { display: flex; position: relative; }
.ctl .nav { flex: 1; }
.ctl::after { content: ""; width: 2px; height: 70px; margin-top: 9px; background: #c4c4c4; }
.g1 { width: 171px; }
.g2, .g4 { width: 180px; }
.g3 { width: 179px; }
.login { width: 78px; height: 108px; }
.user { width: 171px; display: grid; grid-template-columns: 66px 96px; grid-template-rows: 32px 33px 34px; gap: 1px 3px; padding-top: 1px; position: relative; }
.user label { text-align: right; padding-right: 3px; align-self: center; white-space: nowrap; }
.user input { width: 96px; border: 2px solid #ddd; padding-left: 4px; background: #fff; }
.user .sunk { border-width: 5px 0 0 5px; border-color: #ccc; margin-top: 5px; height: 34px; }
.user label[for="role"] { padding-top: 8px; }
.logout { width: 60px; background: #39f; border: 2px solid #111; }
.state { background: #f00; color: #4e9a00; border: 1px solid #39f; font-weight: 700; text-align: center; line-height: 32px; }

.pin { position: absolute; width: 19px; height: 10px; }
.pin-user { left: 61px; top: 1px; }
.pin-role { left: 163px; top: 71px; }

/* work area */
.work { flex: none; min-height: 1400px; display: grid; grid-template-columns: 741fr 740fr 410fr; background: linear-gradient(#fafafa, #fafafa) padding-box, #999; }
.col { position: relative; min-width: 0; border-right: 2px solid #555; display: flex; flex-direction: column; }
.oil { border: 0; }
.top { position: relative; height: 298px; border-bottom: 2px solid #555; }
.head { height: 65px; display: flex; align-items: center; padding: 3px 10px 0 10px; white-space: nowrap; }
.head h2 { font-size: 33px; line-height: 40px; font-weight: 700; }
.head u { text-underline-offset: 4px; padding-top: 6px; }
.head strong { margin-left: auto; color: #f00; font-size: 26px; line-height: 30px; padding-bottom: 4px; text-decoration: underline; text-decoration-thickness: 2px; text-underline-offset: 6px; }
.k1 { margin-left: 8px; }
.v5 { margin-left: 5px; }
.v6 { margin-left: 6px; }
.v2 { margin-left: 2px; }
.k2 { margin-left: 26px; }
.k3 { margin-left: 38px; }
.r1 { margin-left: 86px; }
.r2 { margin-left: 3px; }
.r3 { margin-left: 74px; }
.right .head { padding-left: 2px; }
.field { display: flex; align-items: center; height: 31px; margin: 0 21px 2px 13px; }
.field label { width: 90px; font-size: 17px; font-weight: 700; font-family: "Noto Sans CJK SC", sans-serif; }
.field input { flex: 1; min-width: 0; height: 31px; border: 2px solid #bbb; background: #fff; }
.half input { flex: none; width: 396px; }
.right .field { margin: 0 25px 0 11px; }
.right .field label { width: 73px; }
.led { position: relative; width: 136px; white-space: nowrap; }
.led label { display: block; height: 24px; padding: 2px 0 0 2px; color: #111; }
.led button { display: block; width: 136px; height: 136px; background: #39f; border: 2px solid #111; font-weight: 700; }
.led.on button { background: #6f0; }
.led .pin { left: 136px; top: 24px; }
.magnet { margin-left: 15px; }
.pa { left: 343px; top: 23px; }
.pb { left: 528px; top: 21px; }
.pc { left: 631px; top: 19px; }
.pd { left: 438px; top: 22px; }
.pe { left: 542px; top: 22px; }
.edge { right: -18px; top: 12px; }
.oil .edge { right: -6px; }

.mid { height: 185px; border-bottom: 2px solid #555; display: flex; gap: 10px; padding: 0 17px 0 22px; }
.tbl { flex: 1; min-width: 0; }
.tbl h3 { font-size: 15px; line-height: 26px; height: 29px; padding-left: 2px; }
.tbl-box { height: 147px; border: 1px solid #8088a0; background: #fff; padding: 3px; }
table { width: 100%; border-collapse: collapse; table-layout: fixed; }
.c1 { width: 108px; }
.c2 { width: 225px; }
th, td { height: 30px; padding: 0 0 6px 6px; text-align: left; font-weight: 400; border: 2px solid #d0d0d0; line-height: 20px; white-space: nowrap; color: #111; }
th { background: #b2b2b2; height: 29px; }
td { border-width: 0 2px 2px; }
td:first-child, th:first-child { border-left: 0; }
.short td { height: 22px; border-bottom: 0; }
td:last-child { background: #fafafa; }
td.ok { background: #6f0; border-left-color: #6f0; }
.start { width: 154px; }
.start label { display: block; height: 26px; padding: 1px 0 0 5px; }
.start button { width: 154px; height: 154px; border: 3px solid; border-color: #ccc #fff #fff #ddd; font-size: 31px; line-height: 42px; font-weight: 700; background: radial-gradient(circle at 20% 24%, #b0e6ff 0, #58b8ff 18%, #48a8ff 34%, #2c88fa 60%, #1f70d4 82%, #124a90 100%); }

.right .mid { padding: 0 7px 0 27px; gap: 15px; }
.low { flex: 1; }
.live { height: 54px; padding: 14px 0 0 13px; display: flex; align-items: center; white-space: nowrap; }
.l2 { margin-left: 43px; }
.l3 { margin-left: 11px; }
.l4 { margin-left: 142px; }
.chart { width: calc(100% - 54px); margin-left: 13px; overflow: visible; }
.right .chart, .right .palette { margin-left: 33px; width: calc(100% - 53px); }
.right .live { padding-left: 40px; }
.ticks text { font: 22px "Liberation Mono", monospace; fill: #fff; }
.small text { font: 700 17px "Liberation Mono", monospace; fill: #fff; }
.axis { font: 700 22px "Liberation Mono", "Noto Sans CJK SC", monospace; fill: #fff; }
.palette { display: flex; gap: 8px; width: calc(100% - 54px); margin: 4px 0 0 13px; height: 37px; }
.pal { width: 135px; background: linear-gradient(90deg, #dcdcdc, #b4b4b4 80%, #777); border-bottom: 2px solid #888; display: flex; align-items: center; gap: 3px; padding-left: 22px; }
.pal button { width: 29px; height: 29px; border: 1px solid #999; background: #c4c4c4; }
.pal .p-on { background: #777; }
.right .pal { margin-left: 4px; }
.strip { flex: 1; background: #f0f0f0; padding: 10px 37px; }
.strip i { display: block; width: 66%; height: 17px; background: #878787; }
.manual { margin: 58px 0 0 31px; width: 236px; }
.manual label { display: block; font-size: 24px; font-weight: 700; line-height: 32px; padding-left: 8px; }
.manual button { width: 236px; height: 84px; color: #fff; font-size: 24px; background: linear-gradient(#858585, #626262 70%); border: 2px solid #505050; border-bottom-width: 4px; }

.curtain { position: relative; width: 45px; height: 449px; background: #f00; display: flex; justify-content: center; align-items: center; padding-bottom: 26px; }
.curtain span { width: 18px; color: #7fe000; font-weight: 700; line-height: 26px; text-align: center; }
.curtain .pin { left: 100%; top: 0; }
.over { position: absolute; right: -25px; top: 537px; width: 51px; z-index: 1; }

.oil .top { height: 484px; margin-right: 6px; }
.oil .head { padding: 3px 20px 0 14px; }
.oil .field { margin: 0 13px 29px 16px; }
.oil .field label { width: 76px; }
.leds { display: grid; grid-template-columns: 136px 136px; gap: 10px 36px; }
.top .leds { margin-left: 61px; }
.low h3 { font-weight: 700; padding-left: 2px; line-height: 22px; }
.io-row { display: flex; gap: 13px; padding: 7px 0 0 3px; }
.io-row .curtain { margin-top: 24px; }
.io-row .leds { gap: 3px 40px; }

.hscroll { height: 25px; display: flex; align-items: center; }
.target { height: 25px; border: 2px solid #111; background: #f4f4f4; padding: 0 4px 0 3px; line-height: 23px; }
.track { flex: 1; padding: 2px 357px 0 388px; }
.track i { display: block; height: 3px; background: #888; }

.ime { position: absolute; right: 641px; bottom: 6px; height: 38px; background: #fff; border: 1px solid #b8d4f0; border-radius: 3px; padding: 0 0 0 30px; display: flex; align-items: center; }
.ime button { width: 36px; display: grid; place-items: center; color: #0b6fe0; font-weight: 700; font-size: 22px; }
.sogou { position: absolute; left: -21px; top: -7px; }
```
